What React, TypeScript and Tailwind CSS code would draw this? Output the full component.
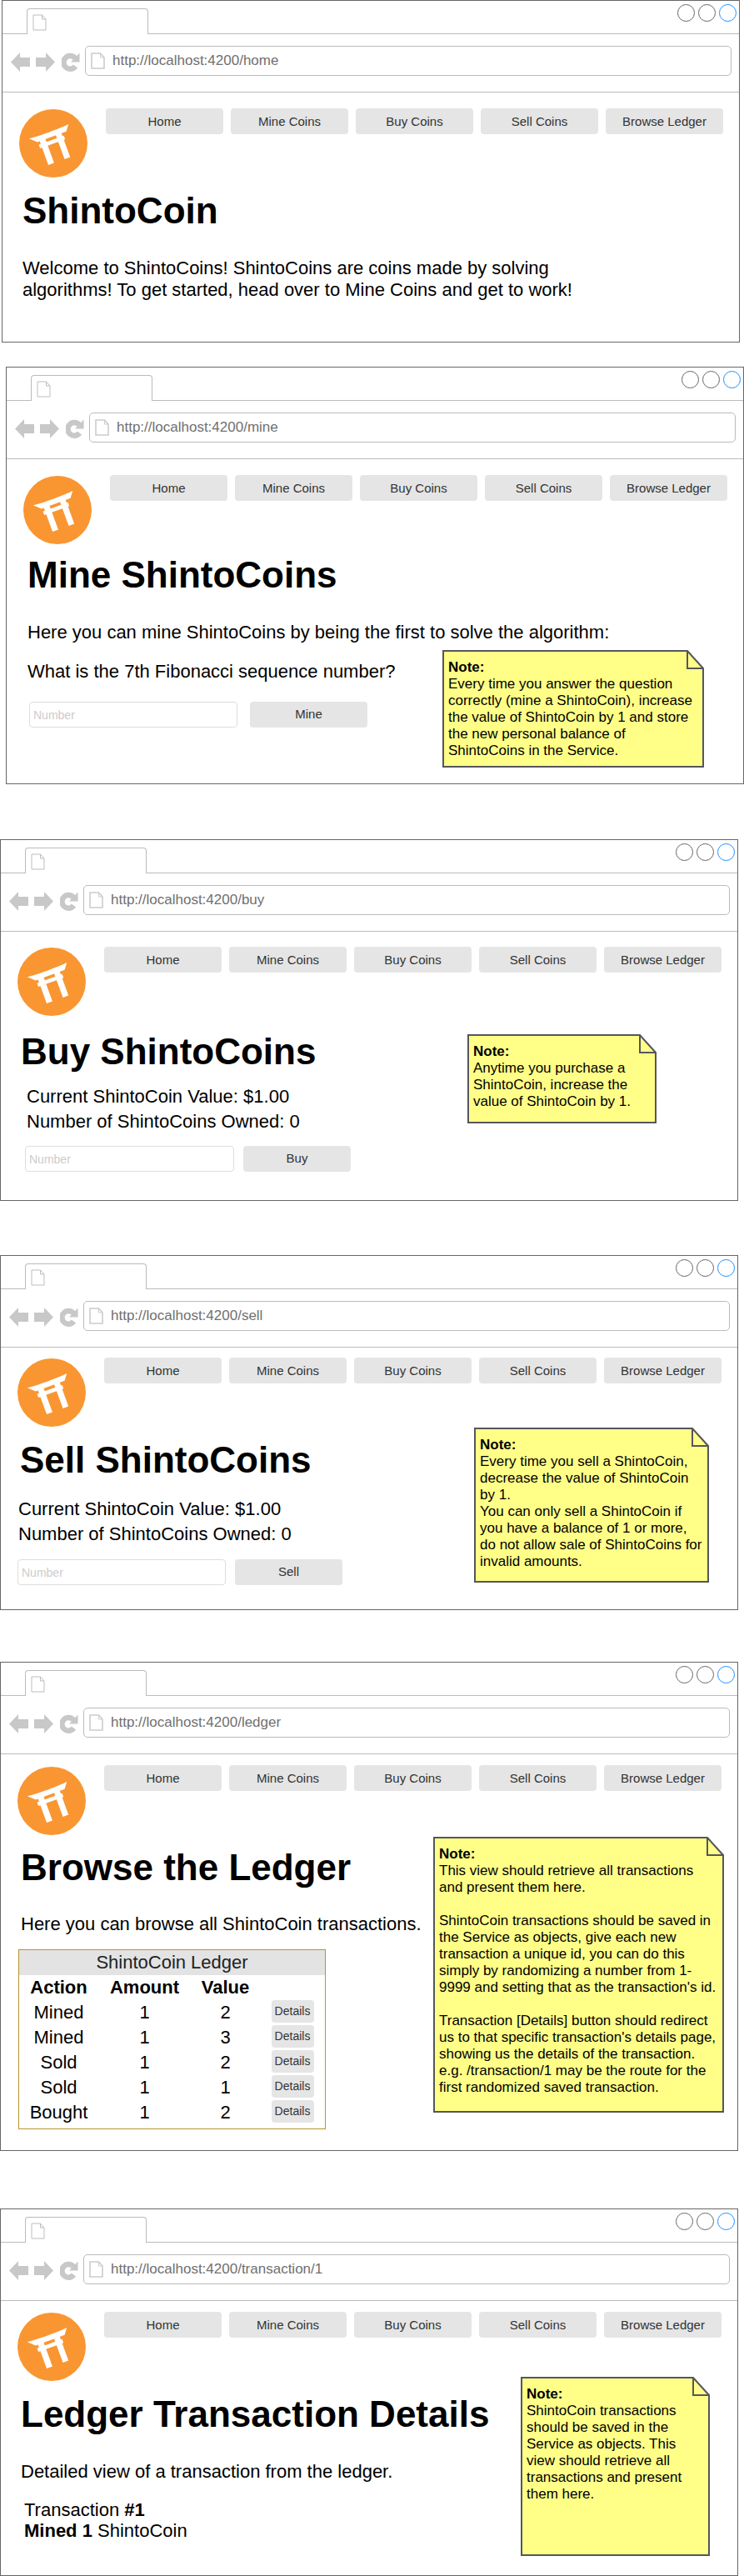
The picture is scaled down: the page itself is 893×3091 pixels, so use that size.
import React from "react";

const NAV = ["Home", "Mine Coins", "Buy Coins", "Sell Coins", "Browse Ledger"];

function FileIcon({ className, thick }: { className: string; thick?: boolean }) {
  return (
    <svg viewBox="0 0 17 20" className={className} fill="none" stroke={thick ? "#cccccc" : "#bdbdbd"} strokeWidth={thick ? 1.6 : 1}>
      <path d="M1 1h10.5L16 6v13H1z" fill="#fff" />
      <path d="M11.5 1v5H16" strokeWidth={1} />
    </svg>
  );
}

function Arrow({ flip }: { flip?: boolean }) {
  return (
    <svg viewBox="0 0 23 23" className={flip ? "w-[23px] h-[23px] -scale-x-100" : "w-[23px] h-[23px]"}>
      <path d="M0 11.5 11 0v6h12v11H11V23z" fill="#c8c8c8" />
    </svg>
  );
}

function Reload() {
  return (
    <svg viewBox="0 0 22 23" className="w-[22px] h-[23px]">
      <path d="M16.500 16.500a7.800 7.800 0 1 1-.5-9.800" fill="none" stroke="#c8c8c8" strokeWidth="6.500" />
      <path d="M21.500 .5v11h-10.500z" fill="#c8c8c8" />
    </svg>
  );
}

function Logo({ className }: { className: string }) {
  return (
    <svg viewBox="0 0 82 82" className={className}>
      <circle cx="41" cy="41" r="41" fill="#f99632" />
      <g transform="rotate(-20 41 41)" fill="#fff">
        <path d="M15.500 25.500c12 1.500 39 1.500 50.500 0l-5.500 7.500H23.500z" />
        <rect x="24" y="36.700" width="32" height="4.600" />
        <rect x="26.500" y="32" width="7.300" height="31.500" />
        <rect x="47.200" y="32" width="7.100" height="31.500" />
      </g>
    </svg>
  );
}

function Nav() {
  return (
    <nav className="ml-[22px] flex w-[741px] gap-[9px]">
      {NAV.map((n) => (
        <button key={n} className="h-[31px] flex-1 rounded-[4px] bg-[#e5e5e5] text-[15px] leading-[31px] text-[#333333]">
          {n}
        </button>
      ))}
    </nav>
  );
}

function Browser({
  url,
  frame,
  head,
  logo,
  children,
}: {
  url: string;
  frame: string;
  head: string;
  logo: string;
  children: React.ReactNode;
}) {
  return (
    <section className={`box-border w-[886px] overflow-hidden border border-[#666666] bg-white ${frame}`}>
      <div className="relative h-[40px] border-b border-[#bbbbbb]">
        <div className="absolute left-[29px] top-[9px] flex h-[31px] w-[146px] rounded-t-[4px] border border-b-0 border-[#bbbbbb] bg-white pl-[6px] pt-[6px]">
          <FileIcon className="h-[20px] w-[17px]" />
        </div>
        <div className="absolute right-[3px] top-[4px] flex gap-[4px]">
          <span className="h-[21px] w-[21px] rounded-full border border-[#666666]" />
          <span className="h-[21px] w-[21px] rounded-full border border-[#666666]" />
          <span className="h-[21px] w-[21px] rounded-full border border-[#1e90ff]" />
        </div>
      </div>
      <div className="flex h-[70px] items-start border-b border-[#bbbbbb] pl-[10px] pt-[14px]">
        <div className="mt-[8px] flex items-center gap-[7px]">
          <Arrow />
          <Arrow flip />
          <div className="ml-[1px]">
            <Reload />
          </div>
        </div>
        <div className="ml-[6px] flex h-[36px] w-[776px] items-center rounded-[5px] border border-[#bbbbbb] pl-[6px]">
          <FileIcon thick className="h-[20px] w-[17px]" />
          <span className="ml-[9px] text-[17px] text-[#707070]">{url}</span>
        </div>
      </div>
      <header className={`flex items-start pl-[20px] ${head}`}>
        <Logo className={`h-[82px] w-[82px] shrink-0 ${logo}`} />
        <Nav />
      </header>
      {children}
    </section>
  );
}

function Title({ children, className }: { children: React.ReactNode; className: string }) {
  return <h1 className={`text-[44px] leading-[44px] font-bold tracking-[0] text-black whitespace-nowrap ${className}`}>{children}</h1>;
}

function Note({ w, h, className, children }: { w: number; h: number; className: string; children: React.ReactNode }) {
  return (
    <aside className={`relative shrink-0 ${className}`}>
      <svg width={w} height={h} className="absolute left-0 top-0">
        <path d={`M1 1H${w - 20}L${w - 1} 22V${h - 1}H1z`} fill="#ffff88" stroke="#55565c" strokeWidth="2" />
        <path d={`M${w - 20} 1V22H${w - 1}`} fill="none" stroke="#55565c" strokeWidth="2" />
      </svg>
      <div className="relative px-[7px] pt-[11px] text-[17px] leading-[20px] text-black">{children}</div>
    </aside>
  );
}

function AmountForm({ label, input, button, row }: { label: string; input: string; button: string; row: string }) {
  return (
    <div className={`flex ${row}`}>
      <input
        placeholder="Number"
        className={`box-border h-[31px] rounded-[4px] border border-[#dddddd] bg-white px-[4px] text-[14px] placeholder:text-[#cccccc] ${input}`}
      />
      <button className={`h-[31px] rounded-[4px] bg-[#e5e5e5] text-[15px] text-[#333333] ${button}`}>{label}</button>
    </div>
  );
}

const ROWS = [
  ["Mined", "1", "2"],
  ["Mined", "1", "3"],
  ["Sold", "1", "2"],
  ["Sold", "1", "1"],
  ["Bought", "1", "2"],
];

function Ledger() {
  return (
    <div className="ml-[21px] mt-[17px] box-border h-[216px] w-[369px] border border-[#b5952f] text-[22px] leading-[30px] text-black">
      <div className="h-[30px] bg-[#e3e3e3] text-center text-[#222222]">ShintoCoin Ledger</div>
      <div className="grid h-[30px] grid-cols-[95px_111px_83px_78px] text-center font-bold">
        <span>Action</span>
        <span>Amount</span>
        <span>Value</span>
        <span />
      </div>
      {ROWS.map((r, i) => (
        <div key={i} className="grid h-[30px] grid-cols-[95px_111px_83px_78px] items-start text-center">
          <span>{r[0]}</span>
          <span>{r[1]}</span>
          <span>{r[2]}</span>
          <span className="flex justify-center">
            <button className="h-[27px] w-[51px] rounded-[4px] bg-[#e5e5e5] text-[14px] leading-[27px] text-[#333333]">Details</button>
          </span>
        </div>
      ))}
    </div>
  );
}

export default function App() {
  return (
    <div className="h-[3091px] w-[893px] overflow-hidden bg-white font-['Liberation_Sans',Arial,sans-serif]">
      <Browser url="http://localhost:4200/home" frame="ml-[2px] h-[411px]" head="pt-[19px]" logo="mt-[1px]">
        <div className="pl-[24px] pt-[18px]">
          <Title className="">ShintoCoin</Title>
          <p className="mt-[34px] w-[680px] text-[22px] leading-[26px] text-black">
            Welcome to ShintoCoins! ShintoCoins are coins made by solving algorithms! To get started, head over to Mine Coins and get to work!
          </p>
        </div>
      </Browser>

      <Browser url="http://localhost:4200/mine" frame="ml-[7px] mt-[29px] h-[501px]" head="pt-[19px]" logo="mt-[1px]">
        <div className="pl-[25px] pt-[15px]">
          <Title className="">Mine ShintoCoins</Title>
          <p className="mt-[34px] text-[22px] leading-[26px] text-black whitespace-nowrap">
            Here you can mine ShintoCoins by being the first to solve the algorithm:
          </p>
          <div className="flex">
            <div className="w-[498px] shrink-0 pt-[21px]">
              <p className="text-[22px] leading-[26px] text-black">What is the 7th Fibonacci sequence number?</p>
              <AmountForm label="Mine" row="mt-[23px] ml-[2px] gap-[15px]" input="w-[250px]" button="w-[141px]" />
            </div>
            <Note w={314} h={141} className="mt-[8px] h-[141px] w-[314px]">
              <b>Note:</b>
              <br />
              Every time you answer the question correctly (mine a ShintoCoin), increase the value of ShintoCoin by 1 and store the new personal balance of ShintoCoins in the Service.
            </Note>
          </div>
        </div>
      </Browser>

      <Browser url="http://localhost:4200/buy" frame="mt-[66px] h-[434px]" head="pt-[18px]" logo="mt-[1px]">
        <div className="flex">
          <div className="w-[560px] shrink-0 pl-[24px] pt-[21px]">
            <Title className="">Buy ShintoCoins</Title>
            <div className="ml-[7px] mt-[17px] text-[22px] leading-[30px] text-black">
              <p>Current ShintoCoin Value: $1.00</p>
              <p>Number of ShintoCoins Owned: 0</p>
            </div>
            <AmountForm label="Buy" row="mt-[14px] ml-[5px] gap-[11px]" input="w-[251px]" button="w-[129px]" />
          </div>
          <Note w={227} h={107} className="mt-[22px] h-[107px] w-[227px]">
            <b>Note:</b>
            <br />
            Anytime you purchase a ShintoCoin, increase the value of ShintoCoin by 1.
          </Note>
        </div>
      </Browser>

      <Browser url="http://localhost:4200/sell" frame="mt-[65px] h-[426px]" head="pt-[12px]" logo="mt-[1px]">
        <div className="flex">
          <div className="w-[568px] shrink-0 pl-[20px] pt-[18px]">
            <Title className="ml-[3px]">Sell ShintoCoins</Title>
            <div className="ml-[1px] mt-[22px] text-[22px] leading-[30px] text-black">
              <p>Current ShintoCoin Value: $1.00</p>
              <p>Number of ShintoCoins Owned: 0</p>
            </div>
            <AmountForm label="Sell" row="mt-[15px] gap-[11px]" input="w-[250px]" button="w-[129px]" />
          </div>
          <Note w={282} h={186} className="mt-[1px] h-[186px] w-[282px]">
            <b>Note:</b>
            <br />
            Every time you sell a ShintoCoin, decrease the value of ShintoCoin by 1.
            <br />
            You can only sell a ShintoCoin if you have a balance of 1 or more, do not allow sale of ShintoCoins for invalid amounts.
          </Note>
        </div>
      </Browser>

      <Browser url="http://localhost:4200/ledger" frame="mt-[62px] h-[587px]" head="pt-[13px]" logo="mt-[2px]">
        <div className="flex">
          <div className="w-[519px] shrink-0 pt-[17px]">
            <Title className="ml-[24px]">Browse the Ledger</Title>
            <p className="ml-[24px] mt-[33px] text-[22px] leading-[26px] text-black whitespace-nowrap">Here you can browse all ShintoCoin transactions.</p>
            <Ledger />
          </div>
          <Note w={349} h={331} className="mt-[2px] h-[331px] w-[349px]">
            <b>Note:</b>
            <br />
            This view should retrieve all transactions and present them here.
            <br />
            <br />
            ShintoCoin transactions should be saved in the Service as objects, give each new transaction a unique id, you can do this simply by randomizing a number from 1-9999 and setting that as the transaction's id.
            <br />
            <br />
            Transaction [Details] button should redirect us to that specific transaction's details page, showing us the details of the transaction. e.g. /transaction/1 may be the route for the first randomized saved transaction.
          </Note>
        </div>
      </Browser>

      <Browser url="http://localhost:4200/transaction/1" frame="mt-[69px] h-[441px]" head="pt-[13px]" logo="mt-[1px]">
        <div className="flex">
          <div className="w-[624px] shrink-0 pl-[24px] pt-[18px]">
            <Title className="">Ledger Transaction Details</Title>
            <p className="mt-[34px] text-[22px] leading-[26px] text-black">Detailed view of a transaction from the ledger.</p>
            <div className="ml-[4px] mt-[20px] text-[22px] leading-[25px] text-black">
              <p>
                Transaction <b>#1</b>
              </p>
              <p>
                <b>Mined 1</b> ShintoCoin
              </p>
            </div>
          </div>
          <Note w={227} h={215} className="-mt-[5px] h-[215px] w-[227px]">
            <b>Note:</b>
            <br />
            ShintoCoin transactions should be saved in the Service as objects. This view should retrieve all transactions and present them here.
          </Note>
        </div>
      </Browser>
    </div>
  );
}
